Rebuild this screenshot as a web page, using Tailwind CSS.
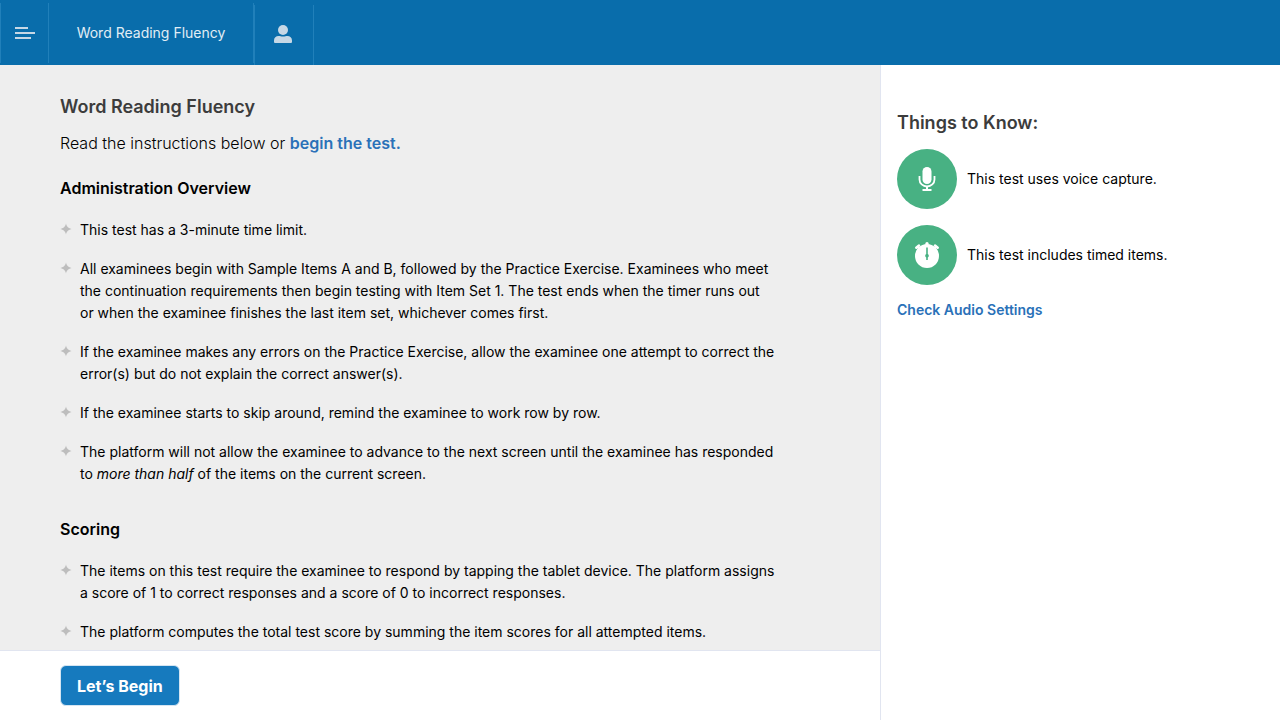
<!DOCTYPE html>
<html lang="en">
<head>
<meta charset="utf-8">
<meta name="viewport" content="width=device-width, initial-scale=1">
<title>Word Reading Fluency</title>
<script src="https://cdn.jsdelivr.net/npm/@tailwindcss/browser@4"></script>
</head>
<body class="flex h-screen flex-col overflow-hidden bg-white font-['Inter',sans-serif] text-sm text-black">
<svg class="hidden" aria-hidden="true">
  <symbol id="star" viewBox="0 0 12 12"><path d="M6 0.5C6.6 3.2 7.6 4.800 11.500 6C7.600 7.200 6.600 8.800 6 11.500C5.400 8.800 4.400 7.200 0.500 6C4.400 4.800 5.400 3.200 6 0.500Z" fill="#bdbdbd"/></symbol>
</svg>
<header class="flex h-[65px] shrink-0 bg-[#096dab] text-[#c6d8e6]">
  <button type="button" aria-label="Menu" class="mt-[3px] flex h-[60px] w-[49px] items-center justify-center border-x border-[#2180ba]">
    <svg class="h-[12px] w-[20px]" viewBox="0 0 20 12" fill="currentColor"><path d="M0 0h13v2H0zM0 5h20v2H0zM0 10h16v2H0z"/></svg>
  </button>
  <div class="mt-[3px] flex h-[60px] w-[205px] items-center justify-center border-r border-[#2180ba] text-[#e1edf5]">Word Reading Fluency</div>
  <button type="button" aria-label="Account" class="mt-[5px] flex h-[60px] w-[60px] items-start border-x border-[#2180ba] pt-[20px] pl-[19px]">
    <svg class="h-[18px] w-[18px]" viewBox="0 0 18 18" fill="currentColor"><circle cx="9" cy="5" r="5"/><path d="M0 17V15.500C0 12.500 2 11 4.500 11C6 11 7 11.600 9 11.600S12 11 13.500 11C16 11 18 12.500 18 15.500V17Q18 18 17 18H1Q0 18 0 17Z"/></svg>
  </button>
</header>
<div class="flex min-h-0 flex-1">
  <div class="flex min-w-0 flex-1 flex-col">
    <main class="min-h-0 flex-1 overflow-hidden bg-[#eee] pt-[30px] pr-[104px] pl-[60px]">
      <h1 class="text-lg leading-6 font-semibold text-[#3c3c3c]">Word Reading Fluency</h1>
      <p class="mt-3 text-base leading-6 font-light">Read the instructions below or <a href="#" class="font-semibold text-[#2a71b8]">begin the test.</a></p>
      <h2 class="mt-[21px] text-base leading-6 font-semibold">Administration Overview</h2>
      <ul class="mt-[19px] flex flex-col gap-[17px] leading-[22px]">
        <li class="flex gap-2"><svg class="mt-1 size-3 shrink-0"><use href="#star"/></svg><span>This test has a 3-minute time limit.</span></li>
        <li class="flex gap-2"><svg class="mt-1 size-3 shrink-0"><use href="#star"/></svg><span>All examinees begin with Sample Items A and B, followed by the Practice Exercise. Examinees who meet the continuation requirements then begin testing with Item Set 1. The test ends when the timer runs out or when the examinee finishes the last item set, whichever comes first.</span></li>
        <li class="flex gap-2"><svg class="mt-1 size-3 shrink-0"><use href="#star"/></svg><span>If the examinee makes any errors on the Practice Exercise, allow the examinee one attempt to correct the error(s) but do not explain the correct answer(s).</span></li>
        <li class="flex gap-2"><svg class="mt-1 size-3 shrink-0"><use href="#star"/></svg><span>If the examinee starts to skip around, remind the examinee to work row by row.</span></li>
        <li class="flex gap-2"><svg class="mt-1 size-3 shrink-0"><use href="#star"/></svg><span>The platform will not allow the examinee to advance to the next screen until the examinee has responded to <em>more than half</em> of the items on the current screen.</span></li>
      </ul>
      <h2 class="mt-8 text-base leading-6 font-semibold">Scoring</h2>
      <ul class="mt-[19px] flex flex-col gap-[17px] leading-[22px]">
        <li class="flex gap-2"><svg class="mt-1 size-3 shrink-0"><use href="#star"/></svg><span>The items on this test require the examinee to respond by tapping the tablet device. The platform assigns a score of 1 to correct responses and a score of 0 to incorrect responses.</span></li>
        <li class="flex gap-2"><svg class="mt-1 size-3 shrink-0"><use href="#star"/></svg><span>The platform computes the total test score by summing the item scores for all attempted items.</span></li>
      </ul>
    </main>
    <footer class="flex h-[70px] shrink-0 items-center border-t border-[#e1e5f0] bg-white pl-[60px]">
      <button type="button" class="h-[41px] rounded-md border border-[#d5e5f2] bg-[#167abe] px-4 text-base font-bold text-white">Let’s Begin</button>
    </footer>
  </div>
  <aside class="w-[400px] shrink-0 border-l border-[#e1e5f0] pt-[46px] pl-4">
    <h2 class="text-lg leading-6 font-semibold text-[#3c3c3c]">Things to Know:</h2>
    <ul class="mt-[14px] flex flex-col gap-4">
      <li class="flex items-center gap-[10px]">
        <span class="flex size-[60px] items-center justify-center rounded-full bg-[#48b183] text-white">
          <svg class="h-[24px] w-[18px]" viewBox="0 0 18 24" fill="none" stroke="currentColor"><rect x="4.500" y="0" width="9" height="17" rx="4.500" fill="currentColor" stroke="none"/><path d="M1.500 9v3.500a7.500 7 0 0 0 15 0V9" stroke-width="1.800"/><path d="M9 19.500v3M4.500 23h9" stroke-width="2"/></svg>
        </span>
        <span>This test uses voice capture.</span>
      </li>
      <li class="flex items-center gap-[10px]">
        <span class="flex size-[60px] items-center justify-center rounded-full bg-[#48b183] text-white">
          <svg class="size-[26px]" viewBox="0 0 26 26"><path d="M2.300 5.800L5 3.500M23.700 5.800L21 3.500" stroke="#fff" stroke-width="2.500" stroke-linecap="round"/><path d="M4 5L7 8M22 5L19 8" stroke="#fff" stroke-width="2"/><circle cx="13" cy="1.700" r="1.700" fill="#fff"/><circle cx="13" cy="14" r="12" fill="#fff"/><path d="M12.200 5.500h1.600v6.500a2 2 0 0 1 0 3.500V18h-1.600v-2.500a2 2 0 0 1 0-3.500Z" fill="#48b183"/></svg>
        </span>
        <span>This test includes timed items.</span>
      </li>
    </ul>
    <a href="#" class="mt-[15px] inline-block font-semibold text-[#2a71b8]">Check Audio Settings</a>
  </aside>
</div>
</body>
</html>
